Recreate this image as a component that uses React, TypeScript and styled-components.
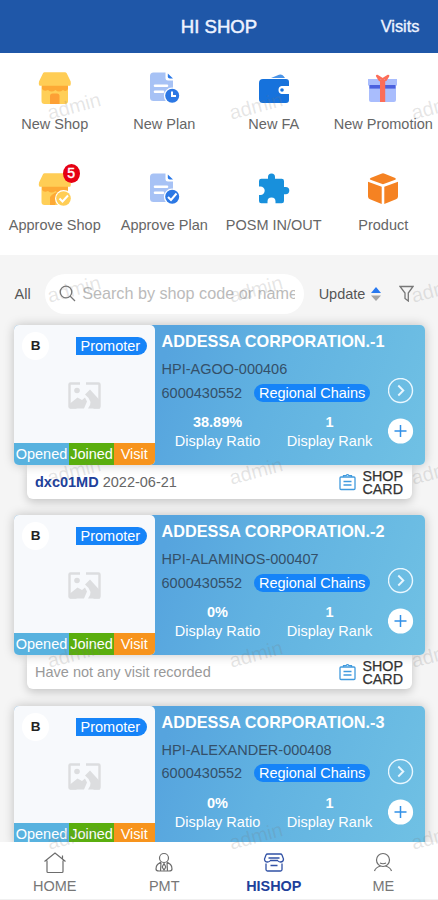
import React from "react";
import styled, { createGlobalStyle, css } from "styled-components";

const Global = createGlobalStyle`
  * { box-sizing: border-box; }
  body { margin: 0; background: #f5f5f5; font-family: "Liberation Sans", Arial, sans-serif; font-size: 14.5px; color: #555; }
  svg { display: block; flex: none; }
`;

const Screen = styled.div`
  position: relative;
  width: 438px;
  height: 900px;
  display: flex;
  flex-direction: column;
  overflow: hidden;
  background: #f5f5f5;
`;

const Header = styled.header`
  height: 53px;
  flex: none;
  display: grid;
  grid-template-columns: 1fr auto 1fr;
  align-items: center;
  background: #1f57a8;
  color: #eef3ff;
  padding: 0 18.5px;
`;
const HeaderTitle = styled.h1`
  grid-column: 2;
  margin: 0;
  font-size: 18.6px;
  font-weight: 400;
  -webkit-text-stroke: 0.5px currentColor;
`;
const HeaderLink = styled.a`
  justify-self: end;
  font-size: 16.4px;
  -webkit-text-stroke: 0.35px currentColor;
`;

const Menu = styled.nav`
  height: 202px;
  flex: none;
  background: #fff;
  display: grid;
  grid-template-columns: repeat(4, 109.5px);
  grid-template-rows: 101px 101px;
`;
const MenuItem = styled.div`
  display: flex;
  flex-direction: column;
  align-items: center;
  padding-top: 18px;
  gap: 10px;
  line-height: 18px;
  color: #666;
  white-space: nowrap;
`;
const MenuIcon = styled.div`
  position: relative;
  width: 34px;
  height: 34px;
`;
const Badge = styled.span`
  position: absolute;
  top: -8px;
  left: 25px;
  width: 17px;
  height: 19px;
  border-radius: 50%;
  background: #e60012;
  color: #fff;
  font-size: 14px;
  line-height: 19px;
  text-align: center;
  -webkit-text-stroke: 0.4px #fff;
`;

const FilterBar = styled.div`
  height: 70px;
  flex: none;
  display: flex;
  align-items: center;
  padding: 7px 22px 0 14.5px;
`;
const SearchBox = styled.div`
  width: 259px;
  height: 40px;
  margin: 0 14.5px 0 14.5px;
  padding: 0 9px 0 14px;
  border-radius: 20px;
  background: #fff;
  display: flex;
  align-items: center;
  gap: 6px;
`;
const Placeholder = styled.span`
  flex: 1;
  min-width: 0;
  overflow: hidden;
  white-space: nowrap;
  font-size: 16.2px;
  line-height: 22px;
  padding-bottom: 2px;
  color: #bbb;
`;
const SortLabel = styled.div`
  display: flex;
  align-items: center;
  gap: 6px;
  margin-right: 18px;
`;

const List = styled.main`
  flex: 1;
  min-height: 0;
  overflow: hidden;
  display: flex;
  flex-direction: column;
  gap: 16.1px;
  margin-top: -14px;
  padding: 14.4px 0 0 14px;
`;
const Shop = styled.article`
  width: 410.5px;
  flex: none;
`;
const Card = styled.div`
  position: relative;
  height: 140px;
  display: flex;
  border-radius: 5px;
  background: linear-gradient(110deg, #56a4de 35%, #61b2e1 60%, #70c1e4 100%);
  box-shadow: 0 0 11px rgba(0, 0, 0, 0.22);
`;
const Photo = styled.div`
  width: 140.5px;
  height: 140px;
  border-radius: 5px;
  overflow: hidden;
  background: #f7f9fc;
  display: flex;
  flex-direction: column;
`;
const PhotoTop = styled.div`
  display: flex;
  justify-content: space-between;
  align-items: center;
  padding: 7px 7.5px 0 8px;
  height: 35px;
`;
const Grade = styled.span`
  width: 27px;
  height: 28px;
  border-radius: 50%;
  background: #fff;
  color: #222;
  font-weight: 700;
  font-size: 13.5px;
  line-height: 27px;
  text-align: center;
`;
const Promoter = styled.span`
  height: 18px;
  width: 71px;
  background: #1684f8;
  color: #fff;
  border-radius: 0 9px 9px 0;
  padding-left: 4.5px;
  line-height: 19px;
  white-space: nowrap;
`;
const PhotoBody = styled.div`
  flex: 1;
  display: flex;
  justify-content: center;
  padding-top: 21px;
`;
const Tags = styled.div`
  display: grid;
  grid-template-columns: 55px 45px 40.5px;
  height: 22.5px;
  flex: none;
`;
const Tag = styled.span<{ $color: string }>`
  background: ${(p) => p.$color};
  color: #fff;
  text-align: center;
  line-height: 23px;
  white-space: nowrap;
`;

const Info = styled.div`
  width: 233px;
  padding-left: 7px;
  display: flex;
  flex-direction: column;
  color: #345069;
  white-space: nowrap;
`;
const ShopName = styled.h2`
  margin: 0;
  height: 33px;
  line-height: 32px;
  font-size: 16.25px;
  color: #fff;
`;
const Code = styled.div`
  height: 22px;
  line-height: 22px;
`;
const NumberLine = styled.div`
  height: 25px;
  display: flex;
  align-items: center;
  gap: 12px;
`;
const Channel = styled.span`
  height: 18px;
  width: 116px;
  border-radius: 9px;
  background: #1684f8;
  color: #fff;
  line-height: 18.5px;
  text-align: center;
`;
const Stats = styled.div`
  display: grid;
  grid-template-columns: 112px 112px;
  padding-top: 8px;
  text-align: center;
  color: #fff;
`;
const Stat = styled.div`
  line-height: 18px;
`;
const StatValue = styled.strong`
  display: block;
  line-height: 19px;
`;
const Actions = styled.div`
  flex: 1;
  display: flex;
  flex-direction: column;
  gap: 14px;
  padding-top: 53px;
`;

const Tail = styled.div`
  height: 34px;
  margin: 0 13px;
  padding: 0 8px 0 8px;
  background: #fff;
  border-radius: 0 0 6px 6px;
  box-shadow: 0 3px 10px rgba(0, 0, 0, 0.2);
  display: flex;
  align-items: center;
  justify-content: space-between;
  white-space: nowrap;
`;
const Visit = styled.span<{ $empty?: boolean }>`
  color: ${(p) => (p.$empty ? "#999" : "#666")};
  b { color: #20409a; }
`;
const ShopCard = styled.div`
  display: flex;
  align-items: center;
  gap: 7px;
  color: #333;
  font-size: 14.3px;
  line-height: 13px;
  -webkit-text-stroke: 0.25px currentColor;
`;
const ShopCardLabel = styled.span`
  width: 41px;
  padding-top: 1px;
  white-space: normal;
`;

const TabBar = styled.nav`
  height: 58px;
  flex: none;
  position: relative;
  display: grid;
  grid-template-columns: repeat(4, 109.5px);
  background: #fff;
  border-bottom: 1px solid #f0f0f0;
`;
const Tab = styled.div<{ $active?: boolean }>`
  display: flex;
  flex-direction: column;
  align-items: center;
  padding-top: 9px;
  gap: 2px;
  line-height: 19px;
  color: #777;
  ${(p) => p.$active && css`color: #20409a; font-weight: 700; font-size: 14.4px;`}
`;

const WatermarkLayer = styled.div`
  position: absolute;
  top: 15px;
  left: -17px;
  width: 546px;
  display: grid;
  grid-template-columns: repeat(3, 182px);
  grid-auto-rows: 182.6px;
  pointer-events: none;
`;
const Watermark = styled.span`
  display: flex;
  align-items: center;
  justify-content: center;
  transform: rotate(-15deg);
  font-size: 20px;
  color: rgba(120, 120, 120, 0.19);
`;

const NewShopIcon = ({ approved }: { approved?: boolean }) => (
  <svg width="34" height="34" viewBox="0 0 34 34">
    <rect x="3.5" y="12" width="26.5" height="21" rx="3" fill="#ffcf57" />
    <path d="M4 14h26v4q-2 3.500-5 1-4 3-7.500 0-4 3-7.500 0-4 2-6-1z" fill="#fda935" />
    <path d="M6.5 1.3h20.5q1 0 1.7 1l4 8.200q.500 3-.500 4.200H1.500q-1.200-1.200-.500-4.200l4-8.200q.5-1 1.500-1z" fill="#ffcd55" />
    {approved ? (
      <>
        <path d="M12 33V25q4-5 9-5L17 33z" fill="#fda935" />
        <circle cx="25.500" cy="26.500" r="8.500" fill="#fff" />
        <circle cx="25.500" cy="26.500" r="7.300" fill="#ffcd55" />
        <path d="m21.500 26.500 3 3 5.500-6" fill="none" stroke="#fff" strokeWidth="2" />
      </>
    ) : (
      <path d="M12 33V25q0-2.500 2.500-2.500h4.500q2.500 0 2.500 2.500v8z" fill="#fda035" />
    )}
  </svg>
);

const PlanIcon = ({ approved }: { approved?: boolean }) => (
  <svg width="34" height="34" viewBox="0 0 34 34">
    <path d="M6.500 1.500H24q2 0 2 2V30H6.500q-3.500 0-3.500-3.500V5q0-3.500 3.500-3.500z" fill="#a7c2f5" />
    <path d="M18.500 1v6q0 2.500 2.500 2.500h6V1z" fill="#fff" />
    <path d="M20.800 2.500v3.200q0 1.800 2 1.800H26z" fill="#2978e8" />
    <path d="M8 14.700h12M8 20.700h8" stroke="#fff" strokeWidth="2.600" strokeLinecap="round" />
    <circle cx="25.200" cy="24.800" r="8.300" fill="#fff" />
    <circle cx="25.200" cy="24.800" r="7" fill="#2c78e4" />
    <path d={approved ? "m21 25 3 3 5.500-6.500" : "M25 20.500V25h4"} fill="none" stroke="#fff" strokeWidth="2" />
  </svg>
);

const WalletIcon = () => (
  <svg width="34" height="34" viewBox="0 0 34 34">
    <path d="M14 7 22 3.700q3-1 4.500 1.300L28 7z" fill="#4b94e8" />
    <path d="M6 8h23q3 0 3 3v4h-7.500q-3 .5-3 4t3 4H32v6q0 3-3 3H6q-4 0-4-4V12q0-4 4-4z" fill="#1672dc" />
    <circle cx="25" cy="19" r="1.800" fill="#1672dc" />
  </svg>
);

const GiftIcon = () => (
  <svg width="34" height="34" viewBox="0 0 34 34">
    <path d="M2 8h29v6l-1 1v14q0 2-2 2H5q-2 0-2-2V15l-1-1z" fill="#a9bdfd" />
    <path d="M3.500 14h26v3.600h-26z" fill="#4b61df" />
    <path d="M14 9h5.200v22H14z" fill="#fc6d58" />
    <path d="m11 5 2.500 4M22.300 5l-2.500 4M11 4.800l5.600 3.400 5.700-3.400" stroke="#fc6d58" strokeWidth="2.200" strokeLinecap="round" strokeLinejoin="round" fill="none" />
  </svg>
);

const PuzzleIcon = () => (
  <svg width="34" height="34" viewBox="0 0 34 34">
    <path d="M2 9q0-2.300 2.300-2.300H11V5a3.500 3.500 0 0 1 7 0v1.700h6.700Q27 6.700 27 9v6h1.700a3.600 3.600 0 0 1 0 7.200H27v6.700q0 2.300-2.300 2.300H18.500v-1.800a4 4 0 0 0-8 0v1.800H4.300Q2 31.200 2 29v-6h1.500a4.200 4.200 0 0 0 0-8.400H2z" fill="#1890dc" />
  </svg>
);

const BoxIcon = () => (
  <svg width="34" height="34" viewBox="0 0 34 34">
    <path d="M15.300 1.700q1.700-.7 3.400 0l10.500 4.300q1.500.9 0 1.800L17 12.300 4.500 7.800q-1.500-.9 0-1.800z" fill="#f58222" />
    <path d="m2 9.800 13.700 5V32L4 27.300q-2-.8-2-2.800z" fill="#f58222" />
    <path d="m32 9.800-13.700 5V32L30 27.300q2-.8 2-2.800z" fill="#f58222" />
  </svg>
);

const PictureIcon = () => (
  <svg width="35" height="29" viewBox="0 0 35 29">
    <path d="M13 2.500H3.500q-1 0-1 1V25.500q0 1 1 1h6M19 2.500h12.500q1 0 1 1V25.500q0 1-1 1h-5" fill="none" stroke="#dcdddf" strokeWidth="2.400" />
    <circle cx="10" cy="9.500" r="2.800" fill="#dcdddf" />
    <path d="m3 22.500 7.500-6 4.500 2.500 3-2.500 2 4-3 7H3zM18 13.500l5-5 10 11v8H21q6-7-3-14z" fill="#dcdddf" />
  </svg>
);

const ClipboardIcon = () => (
  <svg width="17" height="18" viewBox="0 0 17 18" fill="none" stroke="#409ade" strokeWidth="1.300">
    <rect x="1" y="4" width="15" height="12.500" rx="1" />
    <path d="M4.500 4V2.700H7q1.500-2 3 0h2.500V4M4.500 8.500h8M4.500 12h8" />
  </svg>
);

const ArrowButton = () => (
  <svg width="26" height="26" viewBox="0 0 26 26" fill="none" stroke="#e9f7ff">
    <circle cx="12.500" cy="12.500" r="12" strokeWidth="1.400" />
    <path d="m10.300 7.500 5 5-5 5" strokeWidth="1.900" />
  </svg>
);
const PlusButton = () => (
  <svg width="26" height="26" viewBox="0 0 26 26">
    <circle cx="12.500" cy="13" r="12.600" fill="#fff" />
    <path d="M12.500 7v12M6.500 13h12" stroke="#3090e8" strokeWidth="1.500" />
  </svg>
);

const HomeIcon = () => (
  <svg width="24" height="24" viewBox="0 0 24 24" fill="none" stroke="#6d6d6d" strokeWidth="1.200">
    <path d="M1.500 10.500 12 2l10.500 8.500M4 9.500V20.500q0 1 1 1h14q1 0 1-1V9.500M19.500 4.500v3" />
  </svg>
);
const PmtIcon = () => (
  <svg width="24" height="24" viewBox="0 0 24 24" fill="none" stroke="#6d6d6d" strokeWidth="1.200">
    <circle cx="12" cy="7" r="4.500" />
    <path d="M9 11 5.500 13.500Q4 15 4 18q0 2 3 2h10q3 0 3-2 0-3-1.500-4.500L15 11M9 11.500 8.500 20M15 11.500l.5 8.500" />
    <path d="m12 12.500 1.800 3.500-1.800 3-1.800-3z" />
  </svg>
);
const StoreIcon = () => (
  <svg width="24" height="24" viewBox="0 0 24 24" fill="none" stroke="#3151a5" strokeWidth="1.300">
    <path d="M5.500 3h13q1 0 1.500 1l1.500 4q0 3-3 3-2 0-3-1.500h-7q-1 1.500-3 1.500-3 0-3-3l1.500-4q.5-1 1.500-1zM6.500 7h11M4 12.500v6q0 1.500 1.500 1.500h13q1.500 0 1.500-1.500v-6M8.500 14.500h7" />
  </svg>
);
const MeIcon = () => (
  <svg width="24" height="24" viewBox="0 0 24 24" fill="none" stroke="#6d6d6d" strokeWidth="1.200">
    <circle cx="12" cy="9" r="6.500" />
    <path d="M9 12q3 1.500 6 0M9.500 15q-5 1.500-6 5M14.500 15q5 1.500 6 5" />
  </svg>
);

const menu = [
  { label: "New Shop", icon: <NewShopIcon /> },
  { label: "New Plan", icon: <PlanIcon /> },
  { label: "New FA", icon: <WalletIcon /> },
  { label: "New Promotion", icon: <GiftIcon /> },
  { label: "Approve Shop", icon: <NewShopIcon approved />, badge: "5" },
  { label: "Approve Plan", icon: <PlanIcon approved /> },
  { label: "POSM IN/OUT", icon: <PuzzleIcon /> },
  { label: "Product", icon: <BoxIcon /> },
];

const shops = [
  { name: "ADDESSA CORPORATION.-1", code: "HPI-AGOO-000406", ratio: "38.89%", visitor: "dxc01MD", date: "2022-06-21" },
  { name: "ADDESSA CORPORATION.-2", code: "HPI-ALAMINOS-000407", ratio: "0%" },
  { name: "ADDESSA CORPORATION.-3", code: "HPI-ALEXANDER-000408", ratio: "0%" },
];

const tabs = [
  { label: "HOME", icon: <HomeIcon /> },
  { label: "PMT", icon: <PmtIcon /> },
  { label: "HISHOP", icon: <StoreIcon />, active: true },
  { label: "ME", icon: <MeIcon /> },
];

export default function App() {
  return (
    <Screen>
      <Global />
      <Header>
        <HeaderTitle>HI SHOP</HeaderTitle>
        <HeaderLink>Visits</HeaderLink>
      </Header>
      <Menu>
        {menu.map((m) => (
          <MenuItem key={m.label}>
            <MenuIcon>
              {m.icon}
              {m.badge && <Badge>{m.badge}</Badge>}
            </MenuIcon>
            {m.label}
          </MenuItem>
        ))}
      </Menu>
      <FilterBar>
        <span>All</span>
        <SearchBox>
          <svg width="17" height="17" viewBox="0 0 17 17" fill="none" stroke="#777" strokeWidth="1.300">
            <circle cx="7" cy="7" r="5.800" />
            <path d="m11 11 5 5" />
          </svg>
          <Placeholder>Search by shop code or name</Placeholder>
        </SearchBox>
        <SortLabel>
          Update
          <svg width="10" height="14" viewBox="0 0 10 14">
            <path d="M5 0 10 6H0z" fill="#2879f0" />
            <path d="M5 14 10 8.500H0z" fill="#a5a5a5" />
          </svg>
        </SortLabel>
        <svg width="15" height="17" viewBox="0 0 15 17" fill="none" stroke="#777" strokeWidth="1.300">
          <path d="M1 1.500h13L9.300 8v8L6 13.500V8z" />
        </svg>
      </FilterBar>
      <List>
        {shops.map((s) => (
          <Shop key={s.code}>
            <Card>
              <Photo>
                <PhotoTop>
                  <Grade>B</Grade>
                  <Promoter>Promoter</Promoter>
                </PhotoTop>
                <PhotoBody><PictureIcon /></PhotoBody>
                <Tags>
                  <Tag $color="#58b2df">Opened</Tag>
                  <Tag $color="#5aae0e">Joined</Tag>
                  <Tag $color="#f7941d">Visit</Tag>
                </Tags>
              </Photo>
              <Info>
                <ShopName>{s.name}</ShopName>
                <Code>{s.code}</Code>
                <NumberLine>
                  6000430552
                  <Channel>Regional Chains</Channel>
                </NumberLine>
                <Stats>
                  <Stat><StatValue>{s.ratio}</StatValue>Display Ratio</Stat>
                  <Stat><StatValue>1</StatValue>Display Rank</Stat>
                </Stats>
              </Info>
              <Actions>
                <ArrowButton />
                <PlusButton />
              </Actions>
            </Card>
            <Tail>
              {s.visitor ? (
                <Visit><b>{s.visitor}</b> {s.date}</Visit>
              ) : (
                <Visit $empty>Have not any visit recorded</Visit>
              )}
              <ShopCard>
                <ClipboardIcon />
                <ShopCardLabel>SHOP CARD</ShopCardLabel>
              </ShopCard>
            </Tail>
          </Shop>
        ))}
      </List>
      <TabBar>
        {tabs.map((t) => (
          <Tab key={t.label} $active={t.active}>
            {t.icon}
            {t.label}
          </Tab>
        ))}
      </TabBar>
      <WatermarkLayer>
        {Array.from({ length: 15 }, (_, i) => (
          <Watermark key={i}>admin</Watermark>
        ))}
      </WatermarkLayer>
    </Screen>
  );
}
